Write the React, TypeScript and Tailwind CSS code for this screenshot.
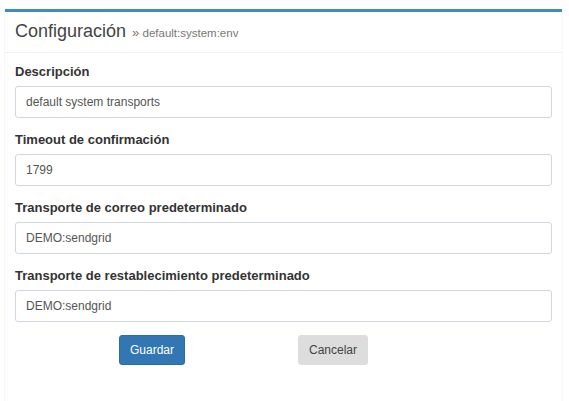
import { useState } from "react";

const fields = [
  { label: "Descripción", value: "default system transports" },
  { label: "Timeout de confirmación", value: "1799" },
  { label: "Transporte de correo predeterminado", value: "DEMO:sendgrid" },
  { label: "Transporte de restablecimiento predeterminado", value: "DEMO:sendgrid" },
];

export default function App() {
  const [values, setValues] = useState(fields.map((f) => f.value));

  return (
    <main className="min-h-screen bg-white pt-[9px] pl-[5px] font-['Liberation_Sans',Arial,sans-serif]">
      <div className="w-[557px] h-[392px] border-t-[3px] border-[#3c8dbc] bg-white shadow-[0_0_1px_rgba(0,0,0,0.18)]">
        <div className="px-[10px] pt-[10px] pb-[9px] border-b border-[#f0f0f0] flex items-baseline">
          <h3 className="text-[18px] leading-[18px] text-[#444]">Configuración</h3>
          <span className="ml-[6px] text-[11.5px] text-[#777]">
            <span className="text-[13px]">»</span> default:system:env
          </span>
        </div>

        <form className="p-[10px]" onSubmit={(e) => e.preventDefault()}>
          {fields.map((f, i) => (
            <div key={f.label} className="mb-[13px]">
              <label className="block text-[13px] leading-[18px] font-bold text-[#333] mb-[5px]">
                {f.label}
              </label>
              <input
                type="text"
                value={values[i]}
                onChange={(e) => {
                  const next = [...values];
                  next[i] = e.target.value;
                  setValues(next);
                }}
                className="w-[537px] h-[32px] px-[10px] border border-[#d2d6de] rounded-[3px] text-[12px] text-[#555] focus:outline-none"
              />
            </div>
          ))}

          <div className="flex">
            <button
              type="submit"
              className="ml-[104px] h-[30px] w-[66px] rounded-[3px] bg-[#3276b4] border border-[#2e6da4] text-white text-[12px]"
            >
              Guardar
            </button>
            <button
              type="button"
              className="ml-[113px] h-[30px] w-[70px] rounded-[3px] bg-[#ddd] border border-[#ddd] text-[#444] text-[12px]"
            >
              Cancelar
            </button>
          </div>
        </form>
      </div>
    </main>
  );
}
